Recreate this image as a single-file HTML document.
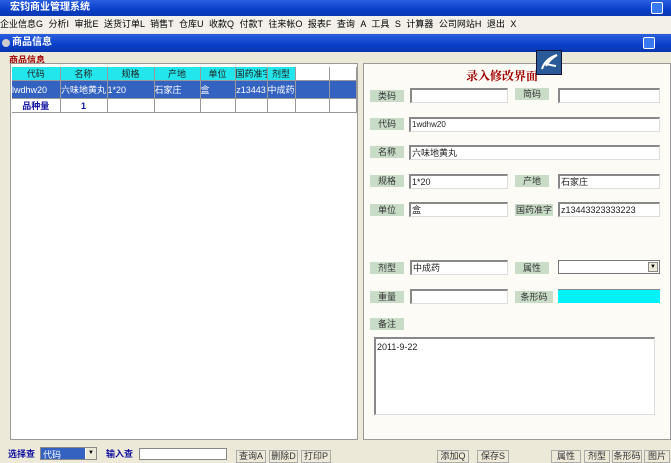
<!DOCTYPE html>
<html><head><meta charset="utf-8"><style>
*{margin:0;padding:0;box-sizing:border-box}
body{width:671px;height:460px;overflow:hidden;background:#ece9d8;font-family:"Liberation Sans","Noto Sans CJK SC",sans-serif;font-size:9px;position:relative}
.a{position:absolute}
.tb{background:linear-gradient(#2a5fe0,#0a3fc8 60%,#0837b0);color:#fff;font-weight:bold}
.btnw{width:12px;height:12px;background:#3a78f0;border:1px solid #fff;border-radius:2px}
.lbl{background:#c8dcc8;color:#333;text-align:center;height:12px;line-height:12px;width:34px}
.inp{background:#fff;border-top:2px solid #888;border-left:2px solid #888;border-right:1px solid #ddd;border-bottom:1px solid #ddd;height:15px;line-height:12px;padding-left:1px;color:#222}
td{border-right:1px solid #999;border-bottom:1px solid #999;text-align:center;white-space:nowrap;overflow:hidden;padding:0}
table{border-collapse:collapse;table-layout:fixed}
.bb{border:1px solid #aaa;background:#ece9d8;height:13px;line-height:11px;text-align:center;color:#333}
</style></head><body>
<div class="a tb" style="left:0;top:0;width:671px;height:16px;line-height:16px;padding-left:10px;font-size:10px">宏钧商业管理系统</div>
<div class="a btnw" style="left:651px;top:2px"></div>
<div class="a" style="left:0;top:16px;width:671px;height:17px;line-height:17px;background:#f2f0e8;font-size:9px;word-spacing:3px;white-space:nowrap">企业信息G 分析I 审批E 送货订单L 销售T 仓库U 收款Q 付款T 往来帐O 报表F 查询 A 工具 S 计算器 公司网站H 退出 X</div>
<div class="a tb" style="left:0;top:34px;width:671px;height:18px;line-height:18px;padding-left:12px;font-size:10px">商品信息</div>
<div class="a" style="left:2px;top:39px;width:8px;height:8px;border-radius:50%;background:#ccc"></div>
<div class="a btnw" style="left:643px;top:37px"></div>
<div class="a" style="left:9px;top:53px;color:#a00000;font-weight:bold;font-size:9px">商品信息</div>
<div class="a" style="left:10px;top:63px;width:348px;height:377px;background:#fff;border:1px solid #999"></div>
<table class="a" style="left:12px;top:67px;width:344px">
<colgroup><col style="width:48px"><col style="width:47px"><col style="width:47px"><col style="width:46px"><col style="width:35px"><col style="width:32px"><col style="width:28px"><col style="width:34px"><col style="width:27px"></colgroup>
<tr style="height:12px;background:#22e6ec;color:#222"><td>代码</td><td>名称</td><td>规格</td><td>产地</td><td>单位</td><td>国药准字</td><td>剂型</td><td style="background:#fff"></td><td style="background:#fff"></td></tr>
<tr style="height:18px;background:#3362c0;color:#fff"><td style="text-align:left">lwdhw20</td><td>六味地黄丸</td><td style="text-align:left">1*20</td><td style="text-align:left">石家庄</td><td style="text-align:left">盒</td><td>z13443</td><td>中成药</td><td></td><td></td></tr>
<tr style="height:13px;color:#1010a0;font-weight:bold"><td>品种量</td><td>1</td><td></td><td></td><td></td><td></td><td></td><td></td><td></td></tr>
</table>
<div class="a" style="left:363px;top:63px;width:308px;height:377px;background:#fcfbf5;border:1px solid #999"></div>
<div class="a" style="left:466px;top:67px;color:#a00000;font-weight:bold;font-size:12px;font-family:'Noto Serif CJK SC',serif">录入修改界面</div>
<div class="a" style="left:536px;top:50px;width:26px;height:25px;background:#2a5a98;border:1px solid #113"><svg width="24" height="23"><path d="M5 18 Q8 8 20 4 Q12 9 9 15 M7 12 Q12 14 19 15" stroke="#fff" stroke-width="2" fill="none"/></svg></div>
<div class="a lbl" style="left:370px;top:90px">类码</div><div class="a inp" style="left:410px;top:88px;width:98px"></div>
<div class="a lbl" style="left:515px;top:88px">简码</div><div class="a inp" style="left:558px;top:88px;width:102px"></div>
<div class="a lbl" style="left:370px;top:118px">代码</div><div class="a inp" style="left:409px;top:117px;width:251px;font-size:8px">1wdhw20</div>
<div class="a lbl" style="left:370px;top:146px">名称</div><div class="a inp" style="left:409px;top:145px;width:251px">六味地黄丸</div>
<div class="a lbl" style="left:370px;top:175px">规格</div><div class="a inp" style="left:409px;top:174px;width:99px">1*20</div>
<div class="a lbl" style="left:515px;top:175px">产地</div><div class="a inp" style="left:558px;top:174px;width:102px">石家庄</div>
<div class="a lbl" style="left:370px;top:204px">单位</div><div class="a inp" style="left:409px;top:202px;width:99px">盒</div>
<div class="a lbl" style="left:515px;top:204px;width:38px">国药准字</div><div class="a inp" style="left:558px;top:202px;width:102px">z13443323333223</div>
<div class="a lbl" style="left:370px;top:262px">剂型</div><div class="a inp" style="left:410px;top:260px;width:98px">中成药</div>
<div class="a lbl" style="left:515px;top:262px">属性</div><div class="a" style="left:558px;top:260px;width:102px;height:14px;background:#fff;border:1px solid #777"><div class="a" style="right:1px;top:1px;width:10px;height:10px;border:1px solid #888;background:#ece9d8;font-size:6px;text-align:center;line-height:9px">▼</div></div>
<div class="a lbl" style="left:370px;top:291px">重量</div><div class="a inp" style="left:410px;top:289px;width:98px"></div>
<div class="a lbl" style="left:515px;top:291px;width:38px">条形码</div><div class="a" style="left:558px;top:289px;width:102px;height:14px;background:#00f2f8;border-top:1px solid #888"></div>
<div class="a lbl" style="left:370px;top:318px">备注</div>
<div class="a inp" style="left:374px;top:337px;width:281px;height:78px;padding-top:2px">2011-9-22</div>
<div class="a" style="left:8px;top:447px;color:#1010a0;font-weight:bold">选择查</div>
<div class="a" style="left:40px;top:447px;width:57px;height:13px;background:#fff;border:1px solid #888"><div class="a" style="left:0;top:0;width:44px;height:11px;background:#3362c0;color:#fff;padding-left:2px">代码</div><div class="a" style="right:0;top:0;width:10px;height:11px;background:#ece9d8;font-size:6px;text-align:center;line-height:11px">▼</div></div>
<div class="a" style="left:106px;top:447px;color:#1010a0;font-weight:bold">输入查</div>
<div class="a" style="left:139px;top:448px;width:88px;height:12px;background:#fff;border:1px solid #888"></div>
<div class="a bb" style="left:236px;top:450px;width:30px">查询A</div>
<div class="a bb" style="left:269px;top:450px;width:29px">删除D</div>
<div class="a bb" style="left:301px;top:450px;width:30px">打印P</div>
<div class="a bb" style="left:437px;top:450px;width:32px">添加Q</div>
<div class="a bb" style="left:477px;top:450px;width:32px">保存S</div>
<div class="a bb" style="left:551px;top:450px;width:30px">属性</div>
<div class="a bb" style="left:584px;top:450px;width:26px">剂型</div>
<div class="a bb" style="left:612px;top:450px;width:30px">条形码</div>
<div class="a bb" style="left:644px;top:450px;width:26px">图片</div>
</body></html>
